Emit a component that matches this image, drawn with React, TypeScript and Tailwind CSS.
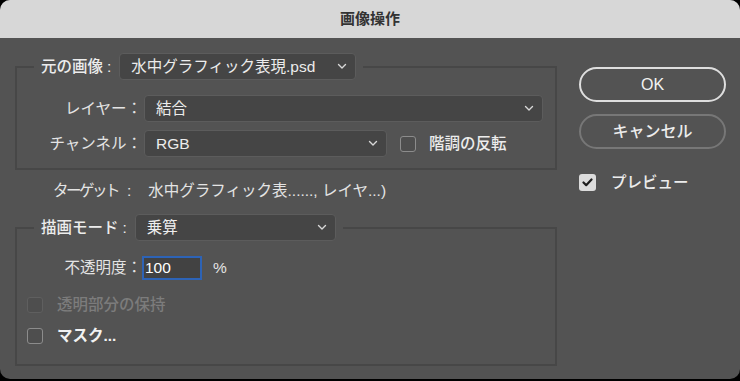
import React from "react";

function Chevron() {
  return (
    <svg width="10" height="7" viewBox="0 0 10 7" className="shrink-0">
      <polyline points="1.5,1.5 5,5 8.5,1.5" fill="none" stroke="#d8d8d8" strokeWidth="1.4" strokeLinecap="round" strokeLinejoin="round" />
    </svg>
  );
}

function Select({ text, className }: { text: string; className: string }) {
  return (
    <div
      className={
        "flex h-[27px] items-center justify-between rounded-[4px] border border-[#5c5c5c] bg-[#454545] pl-[11px] pr-[8px] text-[15.5px] text-[#ececec] " +
        className
      }
    >
      <span className="leading-none">{text}</span>
      <Chevron />
    </div>
  );
}

function Check({ disabled, checked }: { disabled?: boolean; checked?: boolean }) {
  if (checked) {
    return (
      <div className="flex h-[17px] w-[17px] shrink-0 items-center justify-center rounded-[3px] bg-[#dcdcdc]">
        <svg width="11" height="9" viewBox="0 0 11 9">
          <polyline points="1.5,4.5 4.2,7.2 9.5,1.5" fill="none" stroke="#1e1e1e" strokeWidth="2.2" strokeLinecap="round" strokeLinejoin="round" />
        </svg>
      </div>
    );
  }
  return (
    <div
      className={
        "h-[16px] w-[16px] shrink-0 rounded-[3px] border-[1.5px] bg-[#4e4e4e] " +
        (disabled ? "border-[#5f5f5f]" : "border-[#8c8c8c]")
      }
    />
  );
}

export default function App() {
  return (
    <div className="h-[381px] w-[740px] bg-black [font-family:'Liberation_Sans','Noto_Sans_CJK_JP',sans-serif]">
      <div className="flex h-[379px] w-[740px] flex-col overflow-hidden rounded-[10px] bg-[#535353]">
        <div className="flex h-[38px] shrink-0 items-center justify-center bg-[#d7d7d7] text-[15px] font-bold text-[#333333]">
          画像操作
        </div>
        <div className="flex flex-1 flex-row">
          {/* left column */}
          <div className="flex w-[557px] flex-col pl-[15px] pt-[15px]">
            <fieldset className="m-0 w-[542px] border-2 border-[#474747] p-0 pb-[11px]">
              <legend className="ml-[17px] px-[7px]">
                <div className="flex items-center">
                  <span className="text-[15.5px] font-medium leading-none text-[#ececec]">
                    元の画像<span className="ml-[4px]">:</span>
                  </span>
                  <Select text="水中グラフィック表現.psd" className="ml-[8px] w-[237px]" />
                </div>
              </legend>
              <div className="flex flex-col gap-[8px] pt-[15px]">
                <div className="flex items-center">
                  <span className="w-[125px] text-right text-[15.5px] leading-none text-[#e4e4e4]">レイヤー：</span>
                  <Select text="結合" className="ml-[2px] w-[399px]" />
                </div>
                <div className="flex items-center">
                  <span className="w-[125px] text-right text-[15.5px] leading-none text-[#e4e4e4]">チャンネル：</span>
                  <Select text="RGB" className="ml-[2px] w-[243px]" />
                  <div className="ml-[13px]">
                    <Check />
                  </div>
                  <span className="ml-[13px] text-[15.5px] font-medium leading-none text-[#ececec]">階調の反転</span>
                </div>
              </div>
            </fieldset>

            <div className="mt-[11px] flex h-[20px] items-center pl-[38px] text-[15.5px] text-[#e4e4e4]">
              <span className="tracking-[-2.5px]">ターゲット</span>
              <span className="ml-[9px]">:</span>
              <span className="ml-[17px]">水中グラフィック表......, レイヤ...)</span>
            </div>

            <fieldset className="m-0 mt-[13px] w-[542px] border-2 border-[#474747] p-0 pb-[20px]">
              <legend className="ml-[17px] px-[7px]">
                <div className="flex items-center">
                  <span className="text-[15.5px] font-medium leading-none text-[#ececec]">
                    描画モード<span className="ml-[4px]">:</span>
                  </span>
                  <Select text="乗算" className="ml-[8px] w-[201px]" />
                </div>
              </legend>
              <div className="mt-[15px] flex h-[24px] items-center">
                <span className="w-[125px] text-right text-[15.5px] leading-none text-[#e4e4e4]">不透明度：</span>
                <div className="flex h-[24px] w-[60px] items-center border-2 border-[#2d63b6] bg-[#424242] pl-[1px] text-[15.5px] leading-none text-white">
                  100
                </div>
                <span className="ml-[11px] text-[15.5px] leading-none text-[#e4e4e4]">%</span>
              </div>
              <div className="mt-[17px] flex h-[16px] items-center pl-[10px]">
                <Check disabled />
                <span className="ml-[14px] text-[15.5px] font-medium leading-none text-[#7c7c7c]">透明部分の保持</span>
              </div>
              <div className="mt-[15px] flex h-[16px] items-center pl-[10px]">
                <Check />
                <span className="ml-[14px] text-[15.5px] font-bold leading-none text-[#f2f2f2]">マスク...</span>
              </div>
            </fieldset>
          </div>

          {/* right column */}
          <div className="ml-[22px] flex flex-col pt-[29px]">
            <div className="flex h-[35px] w-[147px] items-center justify-center rounded-full border-2 border-[#dedede] text-[16px] font-medium text-[#f2f2f2]">
              OK
            </div>
            <div className="mt-[12px] flex h-[35px] w-[147px] items-center justify-center rounded-full border-2 border-[#777777] text-[16px] font-medium text-[#ececec]">
              キャンセル
            </div>
            <div className="mt-[25px] flex items-center">
              <Check checked />
              <span className="ml-[15px] text-[15.5px] font-medium leading-none text-[#ececec]">プレビュー</span>
            </div>
          </div>
        </div>
      </div>
    </div>
  );
}
